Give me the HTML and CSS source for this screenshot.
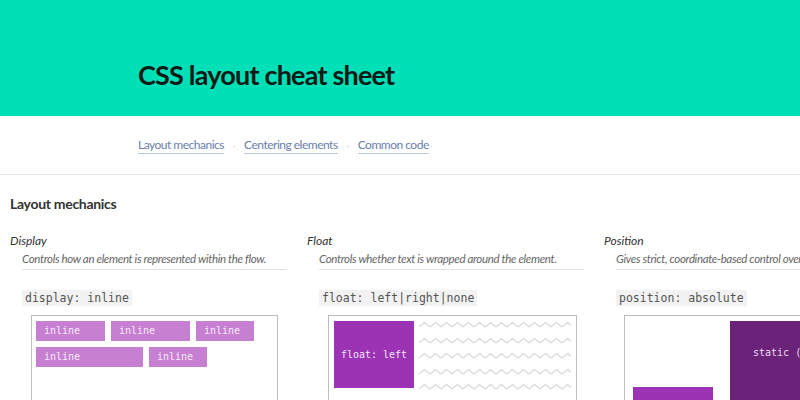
FILE: index.html
```html
<!DOCTYPE html>
<html lang="en">
<head>
    <meta charset="UTF-8">
    <meta name="viewport" content="width=device-width, initial-scale=1.0">
    <title>CSS layout cheat sheet</title>
    <link rel="stylesheet" href="styles.css">
</head>
<body>
    <header class="masthead">
        <h1>CSS layout cheat sheet</h1>
    </header>

    <nav class="toc">
        <a href="#mechanics">Layout mechanics</a>
        <span class="sep">·</span>
        <a href="#centering">Centering elements</a>
        <span class="sep">·</span>
        <a href="#common">Common code</a>
    </nav>

    <section class="section" id="mechanics">
        <h2>Layout mechanics</h2>

        <div class="columns">
            <!-- Display -->
            <div class="topic">
                <h3>Display</h3>
                <p class="desc">Controls how an element is represented within the flow.</p>
                <code class="code">display: inline</code>
                <div class="demo demo-inline">
                    <span class="pill">inline</span>
                    <span class="pill w-80">inline</span>
                    <span class="pill w-58">inline</span>
                    <span class="pill w-107">inline</span>
                    <span class="pill w-58">inline</span>
                </div>
            </div>

            <!-- Float -->
            <div class="topic">
                <h3>Float</h3>
                <p class="desc">Controls whether text is wrapped around the element.</p>
                <code class="code">float: left|right|none</code>
                <div class="demo demo-float">
                    <div class="floater">float: left</div>
                    <svg class="defs" width="0" height="0">
                        <defs>
                            <pattern id="zigzag" width="11" height="8" patternUnits="userSpaceOnUse">
                                <polyline points="0,6 5.5,1.5 11,6" fill="none" stroke="#d6d6dc" stroke-width="1.2"/>
                            </pattern>
                            <pattern id="arches" width="8" height="8" patternUnits="userSpaceOnUse">
                                <polyline points="0,6 4,2 8,6" fill="none" stroke="#d6d6dc" stroke-width="1.2"/>
                            </pattern>
                        </defs>
                    </svg>
                    <div class="wave"><svg><rect width="100%" height="100%" fill="url(#zigzag)"/></svg></div>
                    <div class="wave"><svg><rect width="100%" height="100%" fill="url(#zigzag)"/></svg></div>
                    <div class="wave"><svg><rect width="100%" height="100%" fill="url(#zigzag)"/></svg></div>
                    <div class="wave"><svg><rect width="100%" height="100%" fill="url(#zigzag)"/></svg></div>
                    <div class="wave"><svg><rect width="100%" height="100%" fill="url(#zigzag)"/></svg></div>
                    <div class="wave wave-under"><svg><rect width="100%" height="100%" fill="url(#arches)"/></svg></div>
                </div>
            </div>

            <!-- Position -->
            <div class="topic">
                <h3>Position</h3>
                <p class="desc">Gives strict, coordinate-based control over an element's placement.</p>
                <code class="code">position: absolute</code>
                <div class="demo demo-position">
                    <div class="static-box">static (or relative)</div>
                    <div class="abs-box"></div>
                </div>
            </div>
        </div>
    </section>
</body>
</html>
```

FILE: styles.css
```css
body {
    margin: 0;
    font-family: 'Lato', 'Open Sans', sans-serif;
    color: #333;
    background: white;
    overflow: hidden;
}
.masthead {
    background: #00dfb5;
    height: 116px;
    padding-left: 138px;
    display: flex;
    align-items: center;
}
.masthead h1 {
    margin: 32px 0 0;
    font-size: 27px;
    letter-spacing: -0.8px;
    font-weight: 700;
    color: #0f1a17;
}
.toc {
    height: 58px;
    padding-left: 138px;
    display: flex;
    align-items: center;
    gap: 8px;
    border-bottom: 1px solid #e2e2e2;
    font-size: 12px;
    letter-spacing: -0.5px;
}
.toc a {
    color: #6a80ad;
    text-decoration: none;
    border-bottom: 1px solid #b9c7df;
    line-height: 15px;
    padding-bottom: 1px;
    margin-top: 1px;
}
.toc .sep {
    color: #ccc;
    font-size: 10px;
    padding: 0 1px;
}
.section {
    padding: 0 0 0 10px;
}
.section h2 {
    font-size: 14px;
    letter-spacing: -0.3px;
    font-weight: 700;
    color: #333;
    margin: 20px 0 0;
    line-height: 18px;
}
.columns {
    display: grid;
    grid-template-columns: repeat(3, 297px);
    margin-top: 20px;
}
.topic h3 {
    margin: 0;
    font-size: 12px;
    font-style: italic;
    font-weight: 400;
    color: #333;
    line-height: 16px;
}
.topic .desc {
    margin: 2px 0 0 12px;
    width: 265px;
    font-size: 11.5px;
    letter-spacing: -0.35px;
    font-style: italic;
    color: #666;
    line-height: 16px;
    padding-bottom: 2px;
    border-bottom: 1px solid #e2e2e2;
    white-space: nowrap;
}
.code {
    display: inline-block;
    margin: 20px 0 0 12px;
    padding: 0 3px;
    font-family: 'DejaVu Sans Mono', monospace;
    font-size: 11.5px;
    line-height: 16px;
    background: #f2f2f2;
    color: #555;
}
.demo {
    margin: 9px 0 0 21px;
    width: 245px;
    height: 120px;
    border: 1px solid #bdbdbd;
    border-bottom: none;
}
.demo-inline {
    padding: 5px 4px;
    display: flex;
    flex-wrap: wrap;
    align-content: flex-start;
    gap: 6px;
    width: 237px;
}
.pill {
    background: #c77fd2;
    color: #f6eafa;
    font-family: 'DejaVu Sans Mono', monospace;
    font-size: 10px;
    line-height: 20px;
    padding: 0 8px;
    width: 53px;
}
.pill.w-80 { width: 63px; }
.pill.w-58 { width: 42px; }
.pill.w-107 { width: 91px; }
.demo-float {
    padding: 5px 5px 0;
    width: 237px;
}
.floater {
    float: left;
    width: 80px;
    height: 67px;
    margin-right: 5px;
    background: #9c33b5;
    color: #f5e6fa;
    font-family: 'DejaVu Sans Mono', monospace;
    font-size: 10px;
    display: flex;
    align-items: center;
    justify-content: center;
}
.defs {
    display: block;
}
.wave {
    display: flow-root;
    height: 15.5px;
}
.wave svg {
    display: block;
    width: 100%;
    height: 8px;
}
.wave-under {
    margin-left: 4px;
}
.demo-position {
    position: relative;
    width: 200px;
    margin-left: 20px;
}
.static-box {
    position: absolute;
    left: 105px;
    top: 5px;
    width: 150px;
    height: 120px;
    background: #6a2378;
    color: #eedcf2;
    font-family: 'DejaVu Sans Mono', monospace;
    font-size: 10px;
    padding: 26px 0 0 23px;
    box-sizing: border-box;
    white-space: nowrap;
}
.abs-box {
    position: absolute;
    left: 8px;
    top: 71px;
    width: 80px;
    height: 60px;
    background: #9c33b5;
}
```
